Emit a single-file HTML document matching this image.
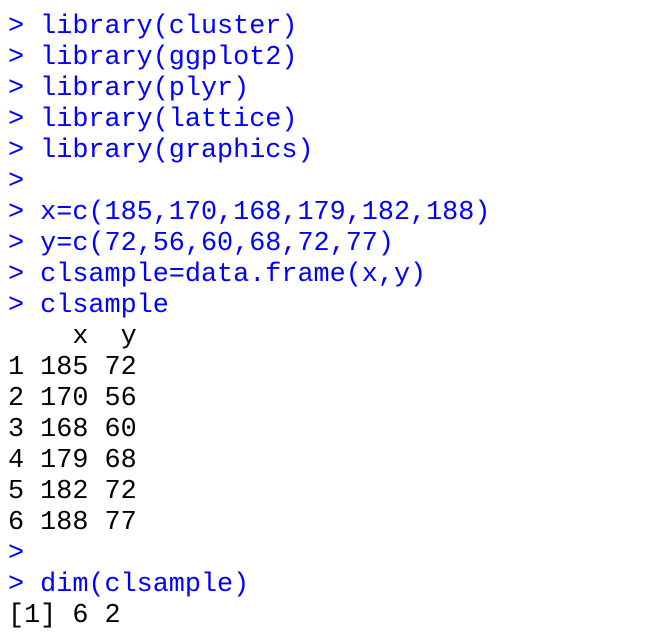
<!DOCTYPE html>
<html><head><style>
body{margin:0;background:#fff;width:659px;height:631px;overflow:hidden}
pre{margin:0;position:absolute;left:8px;top:12px;font-family:"Liberation Mono",monospace;font-size:26.8px;line-height:31px;color:#000}
.b{color:#0000ff}
</style></head><body>
<pre><span class="b">&gt; library(cluster)
&gt; library(ggplot2)
&gt; library(plyr)
&gt; library(lattice)
&gt; library(graphics)
&gt; 
&gt; x=c(185,170,168,179,182,188)
&gt; y=c(72,56,60,68,72,77)
&gt; clsample=data.frame(x,y)
&gt; clsample</span>
    x  y
1 185 72
2 170 56
3 168 60
4 179 68
5 182 72
6 188 77
<span class="b">&gt; 
&gt; dim(clsample)</span>
[1] 6 2</pre>
</body></html>
